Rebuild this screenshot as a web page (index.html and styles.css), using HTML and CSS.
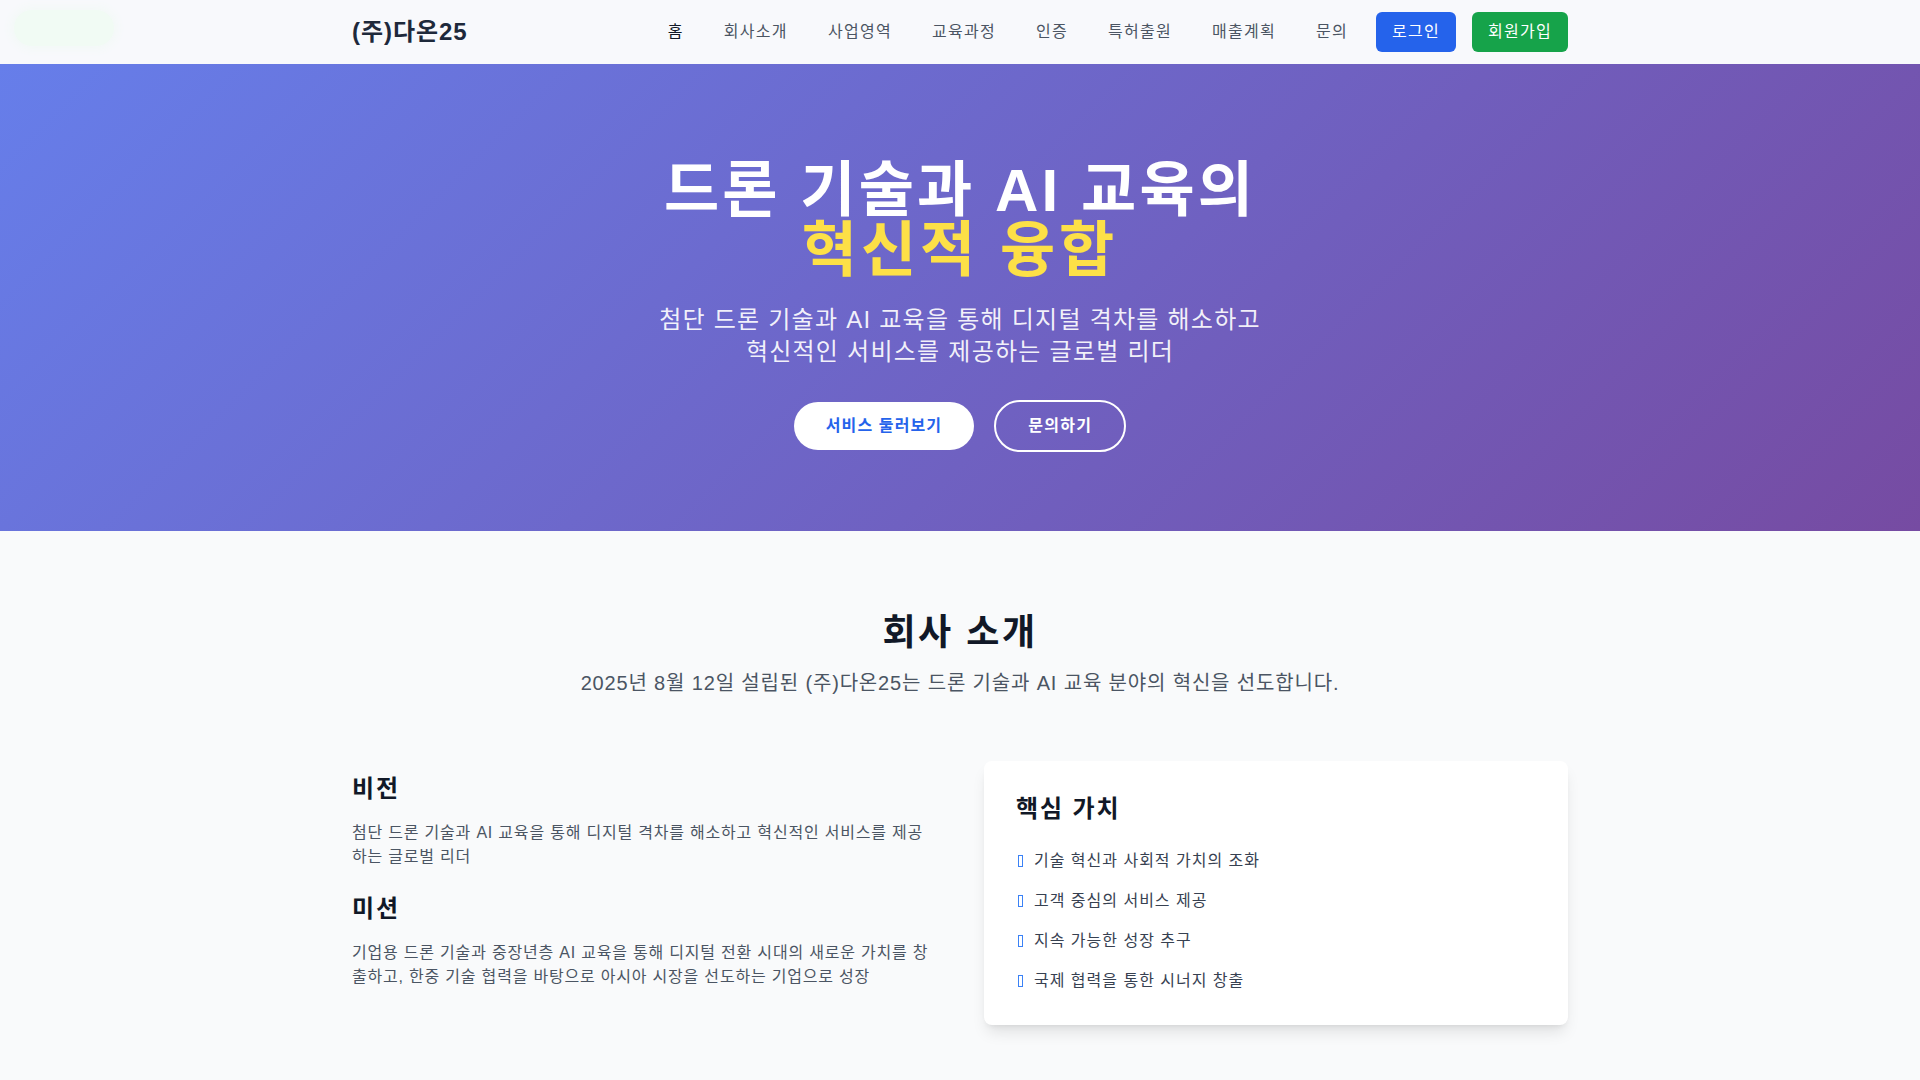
FILE: index.html
```html
<!DOCTYPE html>
<html lang="ko">
<head>
<meta charset="utf-8">
<title>(주)다온25</title>
<link rel="stylesheet" href="styles.css">
</head>
<body>
<div class="ghost-toast"></div>
<header class="header">
  <div class="container header-inner">
    <div class="logo">(주)다온25</div>
    <nav class="nav">
      <a class="nav-link active" href="#">홈</a>
      <a class="nav-link" href="#">회사소개</a>
      <a class="nav-link" href="#">사업영역</a>
      <a class="nav-link" href="#">교육과정</a>
      <a class="nav-link" href="#">인증</a>
      <a class="nav-link" href="#">특허출원</a>
      <a class="nav-link" href="#">매출계획</a>
      <a class="nav-link" href="#">문의</a>
      <a class="btn-login" href="#">로그인</a>
      <a class="btn-signup" href="#">회원가입</a>
    </nav>
  </div>
</header>

<section class="hero">
  <h1 class="hero-title"><span class="hero-line">드론 기술과 AI 교육의</span><span class="hero-accent">혁신적 융합</span></h1>
  <p class="hero-sub">첨단 드론 기술과 AI 교육을 통해 디지털 격차를 해소하고<br>혁신적인 서비스를 제공하는 글로벌 리더</p>
  <div class="hero-actions">
    <a class="btn-primary" href="#">서비스 둘러보기</a>
    <a class="btn-outline" href="#">문의하기</a>
  </div>
</section>

<section class="about">
  <div class="container">
    <h2 class="about-title">회사 소개</h2>
    <p class="about-sub">2025년 8월 12일 설립된 (주)다온25는 드론 기술과 AI 교육 분야의 혁신을 선도합니다.</p>
    <div class="about-grid">
      <div class="about-text">
        <div class="block">
          <h3 class="block-title">비전</h3>
          <p class="block-body">첨단 드론 기술과 AI 교육을 통해 디지털 격차를 해소하고 혁신적인 서비스를 제공하는 글로벌 리더</p>
        </div>
        <div class="block">
          <h3 class="block-title">미션</h3>
          <p class="block-body">기업용 드론 기술과 중장년층 AI 교육을 통해 디지털 전환 시대의 새로운 가치를 창출하고, 한중 기술 협력을 바탕으로 아시아 시장을 선도하는 기업으로 성장</p>
        </div>
      </div>
      <div class="card">
        <h3 class="block-title card-title">핵심 가치</h3>
        <ul class="values">
          <li class="value"><span class="tofu"></span>기술 혁신과 사회적 가치의 조화</li>
          <li class="value"><span class="tofu"></span>고객 중심의 서비스 제공</li>
          <li class="value"><span class="tofu"></span>지속 가능한 성장 추구</li>
          <li class="value"><span class="tofu"></span>국제 협력을 통한 시너지 창출</li>
        </ul>
      </div>
    </div>
  </div>
</section>
</body>
</html>
```

FILE: styles.css
```css
* { box-sizing: border-box; }
html, body { margin: 0; padding: 0; }
body {
  font-family: "Liberation Sans", "Noto Sans CJK KR", sans-serif;
  letter-spacing: 0.05em;
  background: #f9fafb;
  color: #111827;
}
a { text-decoration: none; }
h1, h2, h3, p, ul { margin: 0; padding: 0; }

.ghost-toast {
  position: absolute;
  left: 14px;
  top: 10px;
  width: 100px;
  height: 36px;
  border-radius: 18px;
  background: #f1fbf4;
  box-shadow: 0 0 8px 4px #f3f9f7;
}

.container {
  max-width: 1280px;
  margin: 0 auto;
  padding: 0 32px;
}

.header {
  background: #f8f9fc;
}
.header-inner {
  height: 64px;
  display: flex;
  align-items: center;
  justify-content: space-between;
}
.logo {
  font-size: 24px;
  line-height: 32px;
  font-weight: 700;
  letter-spacing: 0.04em;
  color: #1e293b;
  position: relative;
}
.nav {
  display: flex;
  align-items: center;
  gap: 16px;
}
.nav-link {
  font-size: 16px;
  line-height: 24px;
  letter-spacing: 0.08em;
  padding: 8px 12px;
  color: #4b5563;
}
.nav-link.active { color: #111827; }
.btn-login, .btn-signup {
  font-size: 16px;
  line-height: 24px;
  letter-spacing: 0.08em;
  padding: 8px 16px;
  border-radius: 6px;
  color: #ffffff;
}
.btn-login { background: #2563eb; }
.btn-signup { background: #16a34a; }

.hero {
  background: linear-gradient(135deg, #667eea 0%, #764ba2 100%);
  height: 467px;
  padding-top: 97px;
  text-align: center;
  color: #ffffff;
}
.hero-title {
  font-size: 60px;
  line-height: 60px;
  font-weight: 700;
  margin-bottom: 23px;
}
.hero-line {
  display: block;
  letter-spacing: 0.052em;
}
.hero-accent {
  display: block;
  letter-spacing: 0.066em;
  color: #fde047;
}
.hero-sub {
  font-size: 24px;
  line-height: 32px;
  letter-spacing: 0.052em;
  color: rgba(255, 255, 255, 0.92);
  margin-bottom: 32px;
}
.hero-actions {
  display: flex;
  justify-content: center;
  align-items: center;
  gap: 20px;
}
.btn-primary {
  background: #ffffff;
  color: #2563eb;
  font-size: 16px;
  line-height: 24px;
  font-weight: 600;
  letter-spacing: 0.07em;
  padding: 12px 32px;
  border-radius: 9999px;
}
.btn-outline {
  border: 2px solid #ffffff;
  color: #ffffff;
  font-size: 16px;
  line-height: 24px;
  font-weight: 600;
  letter-spacing: 0.08em;
  padding: 12px 32px;
  border-radius: 9999px;
}

.about {
  padding: 82px 0 56px;
}
.about-title {
  text-align: center;
  font-size: 36px;
  line-height: 40px;
  font-weight: 700;
  letter-spacing: 0.07em;
  color: #111827;
  margin-bottom: 16px;
}
.about-sub {
  text-align: center;
  font-size: 20px;
  line-height: 28px;
  letter-spacing: 0.042em;
  color: #4b5563;
  margin-bottom: 64px;
}
.about-grid {
  display: grid;
  grid-template-columns: 1fr 1fr;
  gap: 48px;
  align-items: center;
}
.block { margin-bottom: 24px; }
.block-title {
  font-size: 24px;
  line-height: 32px;
  font-weight: 700;
  letter-spacing: 0.08em;
  color: #111827;
  margin-bottom: 16px;
}
.block-body {
  font-size: 16px;
  line-height: 24px;
  color: #4b5563;
}
.card {
  background: #ffffff;
  border-radius: 8px;
  padding: 32px;
  box-shadow: 0 10px 15px -3px rgba(0, 0, 0, 0.1), 0 4px 6px -4px rgba(0, 0, 0, 0.1);
}
.card-title { margin-bottom: 24px; }
.values {
  list-style: none;
  display: flex;
  flex-direction: column;
  gap: 16px;
}
.value {
  font-size: 16px;
  line-height: 24px;
  letter-spacing: 0.062em;
  color: #374151;
  display: flex;
  align-items: center;
}
.tofu {
  display: inline-block;
  width: 5px;
  height: 12px;
  border: 1px solid #3b82f6;
  margin-left: 2px;
  margin-right: 11px;
}
```
